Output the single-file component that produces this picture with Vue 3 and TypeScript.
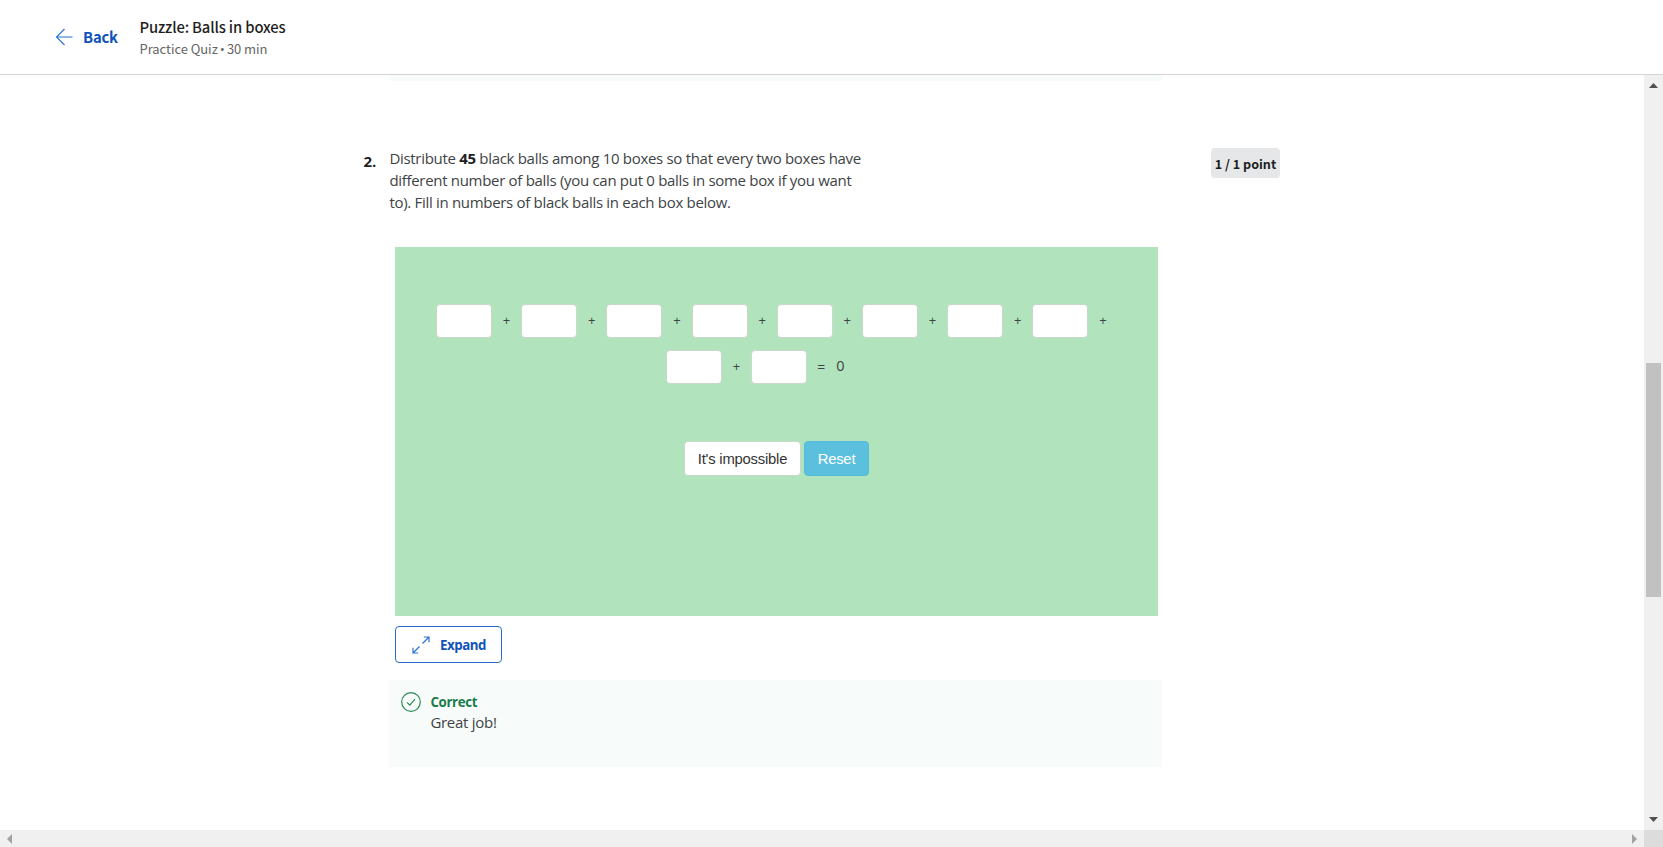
<script setup lang="ts">
import { ref } from 'vue'

const firstRow = ref<string[]>(Array(8).fill(''))
const secondRow = ref<string[]>(Array(2).fill(''))

function reset(): void {
  firstRow.value = Array(8).fill('')
  secondRow.value = Array(2).fill('')
}
</script>

<template>
  <div class="page">
    <header class="topbar">
      <a class="back">
        <svg class="back-icon" viewBox="0 0 18 18" width="18" height="18">
          <path d="M17.5 9H1.5M9.5 1l-8 8 8 8" />
        </svg>
        <span class="back-label">Back</span>
      </a>
      <div class="heading">
        <div class="title">Puzzle: Balls in boxes</div>
        <div class="subtitle">Practice Quiz <span class="dot">•</span> 30 min</div>
      </div>
    </header>

    <div class="body">
      <main class="content">
        <div class="previous"></div>
        <section class="question">
          <div class="number">2.</div>
          <div class="column">
            <p class="prompt">
              Distribute <b>45</b> black balls among 10 boxes so that every two boxes have<br />
              different number of balls (you can put 0 balls in some box if you want<br />
              to). Fill in numbers of black balls in each box below.
            </p>
            <div class="puzzle">
              <div class="row">
                <template v-for="(_, i) in firstRow" :key="i">
                  <input v-model="firstRow[i]" class="box" type="text" />
                  <span class="plus">+</span>
                </template>
              </div>
              <div class="row second">
                <input v-model="secondRow[0]" class="box" type="text" />
                <span class="plus">+</span>
                <input v-model="secondRow[1]" class="box" type="text" />
                <span class="equals">=</span>
                <span class="total">0</span>
              </div>
              <div class="actions">
                <button class="btn impossible">It's impossible</button>
                <button class="btn reset" @click="reset">Reset</button>
              </div>
            </div>
            <button class="expand">
              <svg viewBox="0 0 18 18" width="18" height="18">
                <path d="M10.5 7.5L17 1M11.8 1H17v5.2M7.5 10.5L1 17M1 11.8V17h5.2" />
              </svg>
              <span>Expand</span>
            </button>
            <div class="feedback">
              <svg viewBox="0 0 20 20" width="20" height="20">
                <circle cx="10" cy="10" r="9.3" />
                <path d="M6 10.3l2.8 2.8 5.2-6" />
              </svg>
              <div>
                <div class="correct">Correct</div>
                <div class="message">Great job!</div>
              </div>
            </div>
          </div>
          <div class="points">1 / 1 point</div>
        </section>
      </main>
      <div class="vscroll">
        <svg viewBox="0 0 9 5" width="9" height="5"><path d="M4.5 0L9 5H0z" /></svg>
        <div class="thumb"></div>
        <svg class="down" viewBox="0 0 9 5" width="9" height="5"><path d="M0 0h9L4.5 5z" /></svg>
      </div>
    </div>
    <div class="hscroll">
      <svg viewBox="0 0 5 10" width="5" height="10"><path d="M5 0v10L0 5z" /></svg>
      <svg class="right" viewBox="0 0 5 10" width="5" height="10"><path d="M0 0l5 5-5 5z" /></svg>
      <div class="corner"></div>
    </div>
  </div>
</template>

<style>
body {
  margin: 0;
  overflow: hidden;
}
</style>

<style scoped>
* {
  box-sizing: border-box;
}
.page {
  width: 1663px;
  height: 847px;
  display: flex;
  flex-direction: column;
  background: #fff;
  font-family: "Open Sans", "Noto Sans", sans-serif;
  color: #404345;
  overflow: hidden;
}
.topbar {
  height: 75px;
  flex: none;
  border-bottom: 1px solid #d4d4d4;
  display: flex;
  padding-left: 55px;
  font-family: "Noto Sans CJK SC", sans-serif;
}
.back {
  display: flex;
  align-items: center;
  height: 74px;
  width: 84.5px;
  color: #0f52ba;
}
.back-icon {
  fill: none;
  stroke: #2a73cc;
  stroke-width: 1.1;
}
.back-label {
  margin-left: 10px;
  padding-bottom: 1px;
  font-size: 14.8px;
  font-weight: 700;
  letter-spacing: -0.2px;
}
.heading {
  padding-top: 16px;
  white-space: nowrap;
}
.title {
  font-size: 14.8px;
  line-height: 21px;
  font-weight: 500;
  letter-spacing: -0.15px;
  color: #1f1f1f;
}
.subtitle {
  margin-top: 1px;
  font-size: 13px;
  line-height: 21px;
  letter-spacing: -0.05px;
  color: #666;
}
.dot {
  display: inline-block;
  width: 5px;
  margin: 0 -0.8px;
  font-family: "Open Sans", sans-serif;
  font-size: 13.5px;
  line-height: 10px;
}
.body {
  flex: 1;
  display: flex;
  min-height: 0;
}
.content {
  flex: 1;
  padding-left: 363.4px;
}
.previous {
  width: 773px;
  height: 6px;
  margin-left: 26px;
  background: #f7fbfa;
}
.question {
  display: flex;
  align-items: flex-start;
  padding-top: 67px;
}
.number {
  width: 26px;
  padding-top: 3px;
  font-size: 15px;
  line-height: 20px;
  font-weight: 700;
  color: #1f1f1f;
}
.column {
  width: 773px;
}
.prompt {
  margin: -1px 0 0;
  font-size: 15px;
  line-height: 22px;
  letter-spacing: -0.305px;
  white-space: nowrap;
}
.prompt b {
  color: #1f1f1f;
}
.puzzle {
  width: 763px;
  height: 369px;
  margin: 34px 0 0 5.6px;
  padding-top: 57px;
  background: #b1e4bd;
}
.row {
  display: flex;
  align-items: center;
  height: 34px;
  padding-left: 41px;
}
.second {
  margin-top: 12px;
  padding-left: 271px;
}
.box {
  width: 56px;
  height: 34px;
  padding: 0 8px;
  border: 1px solid #c9d8cb;
  border-radius: 4px;
  background: #fff;
}
.plus {
  width: 29.2px;
  padding-bottom: 3px;
  text-align: center;
  font-size: 13px;
}
.equals {
  margin-left: 10px;
  padding-bottom: 2px;
  font-size: 14px;
}
.total {
  margin-left: 11px;
  padding-bottom: 3px;
  font-size: 14.5px;
}
.actions {
  display: flex;
  align-items: center;
  gap: 3px;
  margin: 57px 0 0 289px;
}
.btn {
  padding: 0;
  border-radius: 4px;
  font-family: "Liberation Sans", Arial, sans-serif;
  font-size: 14.8px;
  letter-spacing: -0.2px;
}
.impossible {
  width: 117px;
  height: 35px;
  border: 1px solid #c9d8cb;
  background: #fff;
  color: #333;
}
.reset {
  width: 65px;
  height: 35px;
  border: 1px solid #55bbd9;
  background: #5bc0de;
  color: #fff;
}
.expand {
  display: flex;
  align-items: center;
  width: 107px;
  height: 37px;
  margin: 10px 0 0 5.6px;
  padding: 0 0 0 16px;
  border: 1px solid #2a6cc8;
  border-radius: 4px;
  background: #fff;
  font-family: inherit;
  font-size: 13.3px;
  font-weight: 700;
  letter-spacing: -0.45px;
  color: #0f52ba;
}
.expand svg {
  margin-right: 10px;
  fill: none;
  stroke: #2a73cc;
  stroke-width: 1.2;
}
.feedback {
  display: flex;
  height: 87px;
  margin-top: 17px;
  padding: 12px 0 0 12px;
  background: #f7fbfa;
}
.feedback svg {
  margin-right: 9px;
  fill: none;
  stroke: #2c8a57;
  stroke-width: 1.2;
}
.correct {
  font-size: 13.3px;
  line-height: 20px;
  font-weight: 700;
  letter-spacing: -0.35px;
  color: #1d7c4d;
}
.message {
  font-size: 15px;
  line-height: 21px;
  letter-spacing: -0.28px;
}
.points {
  width: 69px;
  height: 30px;
  margin-left: 48.6px;
  border-radius: 4px;
  background: #e5e7e8;
  text-align: center;
  font: 700 12.6px/31px "Noto Sans CJK SC", sans-serif;
  color: #1f1f1f;
}
.vscroll {
  width: 19px;
  display: flex;
  flex-direction: column;
  padding: 8px 0 8px 2px;
  background: #f0f0f0;
}
.vscroll svg {
  margin-left: 3px;
  fill: #505050;
}
.thumb {
  width: 15px;
  height: 234px;
  margin-top: 274.5px;
  background: #c1c1c1;
}
.vscroll .down {
  margin-top: auto;
}
.hscroll {
  height: 17px;
  flex: none;
  display: flex;
  align-items: center;
  padding-left: 7px;
  background: #f0f0f0;
}
.hscroll svg {
  fill: #a3a3a3;
}
.hscroll .right {
  margin-left: auto;
  margin-right: 7px;
}
.corner {
  width: 19px;
  height: 17px;
  background: #dcdcdc;
}
</style>
